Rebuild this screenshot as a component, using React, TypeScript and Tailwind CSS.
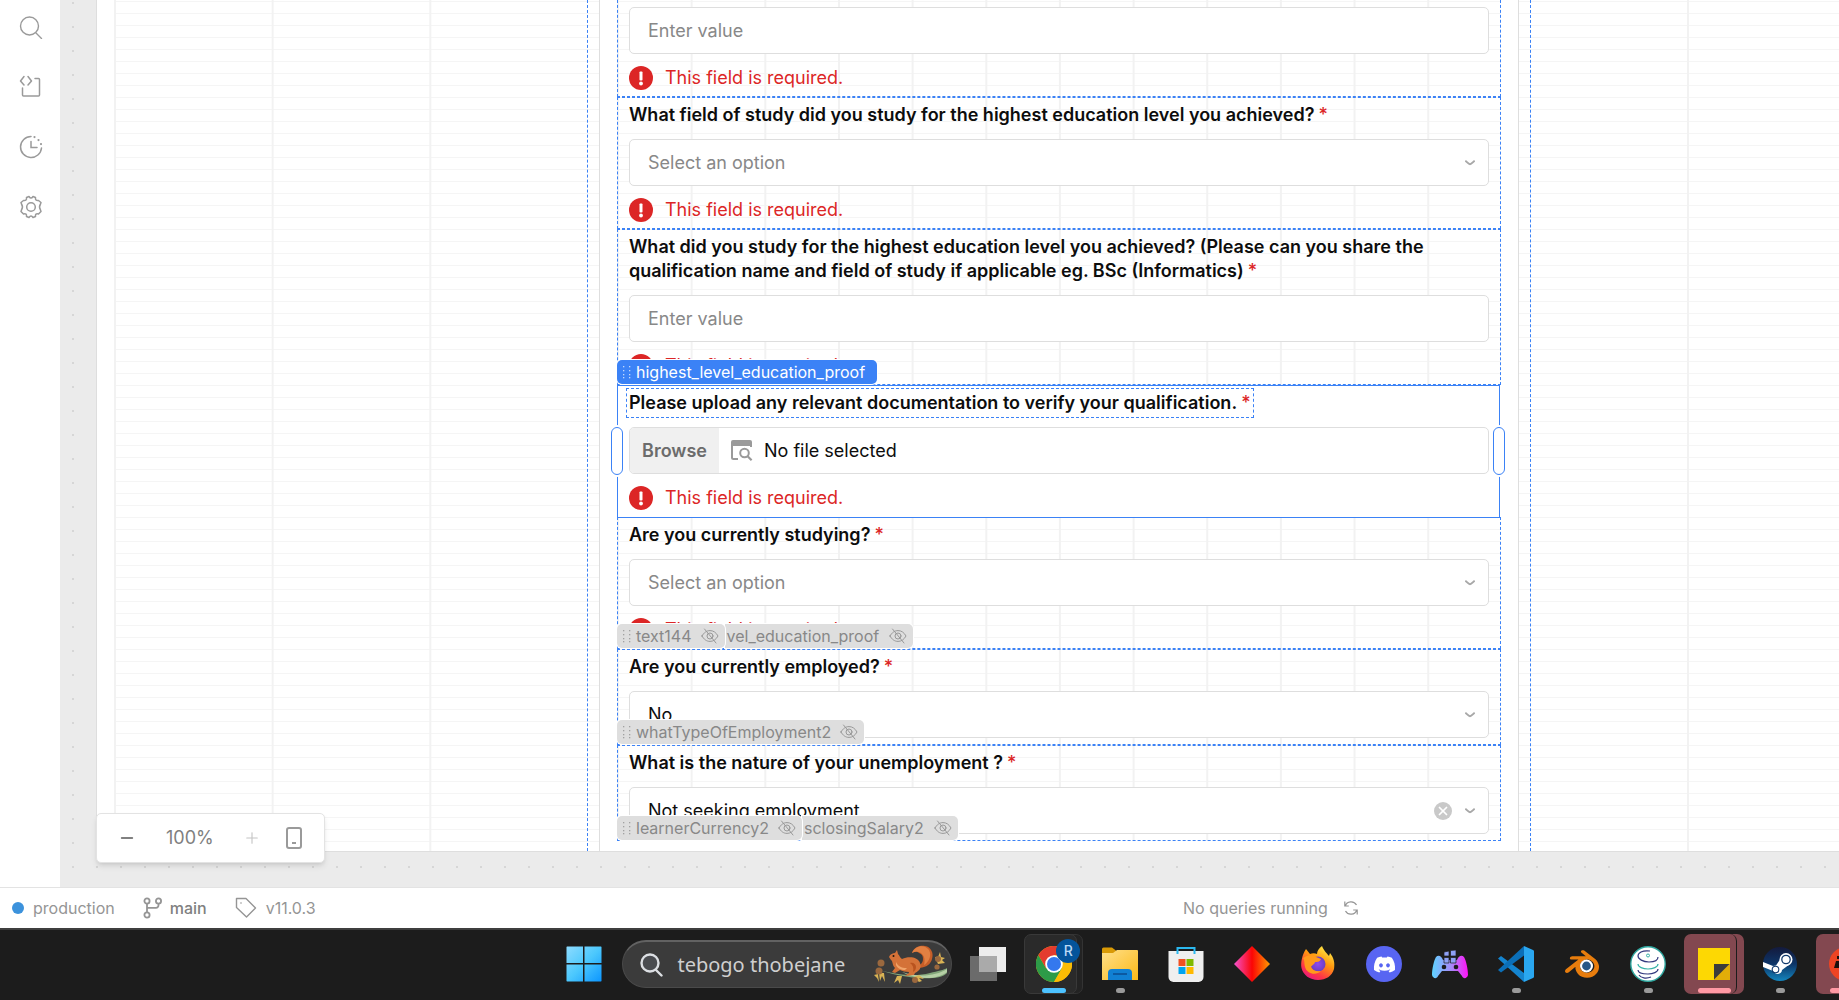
import type { ReactNode } from "react";
import { Minus, Plus, X } from "lucide-react";
import { FaDiscord } from "react-icons/fa";
import { SiBlender } from "react-icons/si";

type Tag = { name: string; tail?: boolean };

type Field = {
  id: string;
  label?: string;
  kind: "text" | "select" | "file";
  value?: string;
  clearable?: boolean;
  error?: boolean;
  activeTag?: string;
  tags?: Tag[];
};

const fields: Field[] = [
  { id: "institution", kind: "text", error: true },
  {
    id: "fieldOfStudy",
    label: "What field of study did you study for the highest education level you achieved?",
    kind: "select",
    error: true,
  },
  {
    id: "qualificationName",
    label:
      "What did you study for the highest education level you achieved? (Please can you share the qualification name and field of study if applicable eg. BSc (Informatics)",
    kind: "text",
    error: true,
    activeTag: "highest_level_education_proof",
  },
  {
    id: "educationProof",
    label: "Please upload any relevant documentation to verify your qualification.",
    kind: "file",
    error: true,
  },
  {
    id: "studying",
    label: "Are you currently studying?",
    kind: "select",
    error: true,
    tags: [{ name: "text144" }, { name: "vel_education_proof", tail: true }],
  },
  {
    id: "employed",
    label: "Are you currently employed?",
    kind: "select",
    value: "No",
    tags: [{ name: "whatTypeOfEmployment2" }],
  },
  {
    id: "unemploymentNature",
    label: "What is the nature of your unemployment ?",
    kind: "select",
    value: "Not seeking employment",
    clearable: true,
    tags: [{ name: "learnerCurrency2" }, { name: "sclosingSalary2", tail: true }],
  },
];

const box = "h-[47px] w-full rounded-[5px] border border-[#dedede] bg-white text-lg";

function Grip() {
  return (
    <svg width="8" height="14" viewBox="0 0 8 14" fill="currentColor" className="shrink-0 opacity-70" aria-hidden="true">
      {[0, 6].map((x) => [1, 5, 9, 12].map((y) => <rect key={`${x}-${y}`} x={x} y={y} width="1.3" height="1.3" />))}
    </svg>
  );
}

function HiddenEye() {
  return (
    <svg width="18" height="16" viewBox="0 0 18 16" fill="none" stroke="currentColor" strokeWidth="1" strokeLinecap="round" className="shrink-0 opacity-80" aria-hidden="true">
      <path d="M1 8c2-3.600 4.700-5.400 8-5.400s6 1.800 8 5.400c-2 3.600-4.700 5.400-8 5.400S3 11.600 1 8z" />
      <circle cx="9" cy="8" r="3" />
      <path d="M3.500 1l11.500 14" />
    </svg>
  );
}

function Tags({ field }: { field: Field }) {
  if (field.activeTag) {
    return (
      <div className="absolute bottom-0 -left-px z-20 flex h-6 items-center gap-[5px] rounded-[5px] bg-[#3b82f6] pr-3 pl-1.5 text-base leading-6 text-white ring-1 ring-white">
        <Grip />
        <span>{field.activeTag}</span>
      </div>
    );
  }
  if (!field.tags) return null;
  return (
    <div className="absolute bottom-0 -left-px z-20 flex text-base leading-6 text-[#888]">
      {field.tags.map((tag) => (
        <div
          key={tag.name}
          className={
            tag.tail
              ? "flex h-6 items-center gap-2.5 rounded-r-[5px] bg-[#dedede] pr-1.5 pl-0.5 ring-1 ring-white"
              : "relative z-10 flex h-6 items-center gap-[5px] rounded-[5px] bg-[#dedede] px-1.5 ring-1 ring-white"
          }
        >
          {!tag.tail && <Grip />}
          <span className={tag.tail ? "" : "pr-1"}>{tag.name}</span>
          <HiddenEye />
        </div>
      ))}
    </div>
  );
}

function FieldError() {
  return (
    <p className="mt-3 flex h-6 items-center gap-3 text-lg leading-6 text-[#dc2626]">
      <svg width="24" height="24" viewBox="0 0 24 24" aria-hidden="true">
        <circle cx="12" cy="12" r="12" fill="#dc2626" />
        <rect x="10.500" y="5.500" width="3" height="9" rx="0.800" fill="#fff" />
        <circle cx="12" cy="17.500" r="1.900" fill="#fff" />
      </svg>
      This field is required.
    </p>
  );
}

function SelectBox({ field }: { field: Field }) {
  return (
    <div className="relative">
      <select
        id={field.id}
        defaultValue={field.value ?? ""}
        className={`${box} appearance-none pr-16 pl-[18px] ${field.value ? "text-[#0d0d0d]" : "text-[#888]"}`}
      >
        {field.value ? <option value={field.value}>{field.value}</option> : <option value="">Select an option</option>}
      </select>
      <div className="pointer-events-none absolute inset-y-0 right-3.5 flex items-center gap-[13px]">
        {field.clearable && (
          <button type="button" aria-label="Clear" className="pointer-events-auto flex size-[18px] items-center justify-center rounded-full bg-[#c9c9c9] text-white">
            <X size={14} strokeWidth={3} />
          </button>
        )}
        <svg width="10" height="6" viewBox="0 0 10 6" fill="none" stroke="#a8a8a8" strokeWidth="2" strokeLinecap="round" aria-hidden="true">
          <path d="M1 1.200C2.500 2.600 3.800 4.200 5 4.200S7.500 2.600 9 1.200" />
        </svg>
      </div>
    </div>
  );
}

function FileBox({ id }: { id: string }) {
  return (
    <div className={`${box} relative flex items-center overflow-hidden`}>
      <input id={id} type="file" className="absolute inset-0 opacity-0" />
      <span className="flex h-full w-[89px] items-center justify-center bg-[#f0f0f0] font-semibold text-[#6c6c6c]">Browse</span>
      <svg width="22" height="21" viewBox="0 0 22 21" fill="none" stroke="#9a9a9a" className="ml-3 shrink-0" aria-hidden="true">
        <path d="M0 6V2a2 2 0 0 1 2-2h17a2 2 0 0 1 2 2v4z" fill="#9a9a9a" stroke="none" />
        <path d="M1 5v12.500a1.500 1.500 0 0 0 1.500 1.500H7M20 5v2" strokeWidth="2" />
        <circle cx="13.500" cy="13" r="4.300" strokeWidth="2" />
        <path d="M16.600 16.200l4 4" strokeWidth="2.200" />
      </svg>
      <span className="ml-[11px] text-[#0d0d0d]">No file selected</span>
    </div>
  );
}

function Widget({ field }: { field: Field }) {
  const selected = field.kind === "file";
  const handle = "absolute top-[41px] z-20 h-12 w-3 rounded-full border border-[#3b82f6] bg-white ring-2 ring-white";
  return (
    <div
      className={
        selected
          ? "relative border border-transparent bg-white px-[11px] pt-[5px] pb-1.5"
          : field.label
            ? "relative border border-dashed border-[#3b82f6] px-[11px] pt-[5px] pb-1.5"
            : "relative border border-t-0 border-dashed border-[#3b82f6] px-[11px] pt-[7px] pb-1.5"
      }
    >
      {field.label && (
        <label htmlFor={field.id} className="mb-3 block text-lg leading-6 font-semibold text-[#0d0d0d]">
          <span className={selected ? "inline-block align-top outline-1 outline-offset-2 outline-[#3b82f6] outline-dashed" : ""}>
            {field.label}
            <span className="ml-1 font-medium text-[#dc2626]">*</span>
          </span>
        </label>
      )}
      {field.kind === "text" && (
        <input id={field.id} type="text" aria-label={field.label ?? "Institution"} placeholder="Enter value" className={`${box} block px-[18px] placeholder:text-[#888]`} />
      )}
      {field.kind === "select" && <SelectBox field={field} />}
      {field.kind === "file" && <FileBox id={field.id} />}
      {field.error && <FieldError />}
      {selected && (
        <>
          {/* selection frame, laid over the neighbours' dashed edges */}
          <span className="pointer-events-none absolute -top-px right-0 -bottom-0.5 -left-px z-10 border border-[#3b82f6]" />
          <span className={`${handle} -left-[7px]`} />
          <span className={`${handle} -right-[5px]`} />
        </>
      )}
      <Tags field={field} />
    </div>
  );
}

function Sidebar() {
  return (
    <nav className="flex w-[60px] shrink-0 flex-col items-center gap-9 bg-white pt-[15px] pl-px text-[#9a9a9a]">
      <button type="button" aria-label="Search">
        <svg width="24" height="24" viewBox="0 0 24 24" fill="none" stroke="currentColor" strokeWidth="1.400" strokeLinecap="round">
          <circle cx="10.500" cy="11" r="9" />
          <path d="M17 18l5.500 5.500" />
        </svg>
      </button>
      <button type="button" aria-label="Code">
        <svg width="24" height="24" viewBox="0 0 24 24" fill="none" stroke="currentColor" strokeWidth="1.500" strokeLinecap="round" strokeLinejoin="round">
          <path d="M5 1.500L1.500 6 5 10M9 1.500L12.500 6 9 10" />
          <path d="M16 3.500h3.500a1 1 0 0 1 1 1V20a1 1 0 0 1-1 1H4.500a1 1 0 0 1-1-1v-7" />
        </svg>
      </button>
      <button type="button" aria-label="History">
        <svg width="24" height="24" viewBox="0 0 24 24" fill="none" stroke="currentColor" strokeWidth="1.500" strokeLinecap="round">
          <path d="M12 1.500a10.500 10.500 0 1 0 10.500 11.500M12 6.500v6h6" />
          <path d="M15.500 2v.1M19.500 5v.1M22 9v.1" strokeWidth="2.200" />
        </svg>
      </button>
      <button type="button" aria-label="Settings">
        <svg width="24" height="24" viewBox="0 0 24 24" fill="none" stroke="currentColor" strokeWidth="1.500" strokeLinejoin="round">
          <path d="M10 1.500Q12 4.500 14 1.500L16.500 2.500Q16 6 19.500 5.500L22 7.500 21.500 9Q19.500 12 21.500 15L22 16.500 19.500 19Q16 18 16.500 21.500L14 22.500Q12 19.500 10 22.500L7.500 21.500Q8 18 4.500 19L2 16.500 2.500 15Q4.500 12 2.500 9L2 7.500 4.500 5.500Q8 6 7.500 2.500z" />
          <circle cx="12" cy="12" r="4.300" />
        </svg>
      </button>
    </nav>
  );
}

function ZoomBar() {
  return (
    <div className="absolute bottom-6 left-9 flex h-[50px] w-[229px] items-center rounded-[5px] border border-[#e3e3e3] bg-white text-[#808080] shadow-md">
      <button type="button" aria-label="Zoom out" className="ml-[21px]">
        <Minus size={18} strokeWidth={2.5} />
      </button>
      <span className="ml-[30px] text-lg">100%</span>
      <button type="button" aria-label="Zoom in" className="ml-auto text-[#c4c4c4]">
        <Plus size={18} strokeWidth={1.5} />
      </button>
      <button type="button" aria-label="Mobile layout" className="mr-[22px] ml-[25px] text-[#9a9a9a]">
        <svg width="16" height="22" viewBox="0 0 16 22" fill="none" stroke="currentColor" strokeWidth="2">
          <rect x="1" y="1" width="14" height="20" rx="2" />
          <path d="M6 16h4" />
        </svg>
      </button>
    </div>
  );
}

const outerCells =
  "bg-[linear-gradient(90deg,#f2f2f2_2px,transparent_2px),linear-gradient(#f5f5f5_1px,transparent_1px)] bg-[size:calc(100%/3)_100%,100%_12px] bg-[position:0_0,0_1px]";

function Canvas() {
  return (
    <main className="relative min-w-0 flex-1 overflow-hidden bg-[#ebebeb] bg-[radial-gradient(circle_at_1px_1px,#d6d6d6_1px,transparent_1px)] bg-[size:24px_24px] bg-[position:12px_2px]">
      <div className="ml-9 grid grid-cols-[473fr_944fr_308fr] border-b border-l border-[#dedede] bg-white pl-[17px]">
        <div className={outerCells} />
        <div className="border-x border-dashed border-[#3b82f6] bg-[linear-gradient(#f5f5f5_1px,transparent_1px)] bg-[size:100%_12px] bg-[position:0_1px] px-[11px]">
          <div className="border-x border-[#dedede] bg-white px-[17px] pb-2.5">
            <div className="bg-[linear-gradient(90deg,#f2f2f2_2px,transparent_2px),linear-gradient(#f5f5f5_1px,transparent_1px)] bg-[size:calc(100%/12)_100%,100%_12px] bg-[position:0_0,0_1px]">
              {fields.map((field) => (
                <Widget key={field.id} field={field} />
              ))}
            </div>
          </div>
        </div>
        <div className="bg-[linear-gradient(90deg,transparent_156px,#f2f2f2_156px),linear-gradient(#f5f5f5_1px,transparent_1px)] bg-[size:158px_100%,100%_12px] bg-[position:0_0,0_1px]" />
      </div>
      <ZoomBar />
    </main>
  );
}

function StatusBar() {
  return (
    <footer className="grid h-[41px] grid-cols-[1183fr_656fr] items-center border-t border-[#e3e3e3] bg-white text-base text-[#959595]">
      <div className="flex items-center pl-3">
        <span className="size-3 rounded-full bg-[#3c92dc]" />
        <span className="ml-[9px]">production</span>
        <svg width="20" height="22" viewBox="0 0 20 22" fill="none" stroke="currentColor" strokeWidth="1.800" className="ml-7" aria-hidden="true">
          <circle cx="4" cy="4" r="2.600" />
          <circle cx="4" cy="18" r="2.600" />
          <circle cx="15.500" cy="4" r="2.600" />
          <path d="M4 6.600v8.800M4 10.800h9a2.500 2.500 0 0 0 2.500-2.500V6.600" />
        </svg>
        <span className="ml-[7px] font-medium text-[#808080]">main</span>
        <svg width="22" height="22" viewBox="0 0 22 22" fill="none" stroke="currentColor" strokeWidth="1.400" strokeLinejoin="round" className="ml-7" aria-hidden="true">
          <path d="M1.500 1.500h9.500l9.500 9.500-9 9-10-9.500z" />
          <circle cx="6" cy="6" r="0.800" fill="currentColor" stroke="none" />
        </svg>
        <span className="ml-[9px]">v11.0.3</span>
      </div>
      <div className="flex items-center gap-4">
        <span>No queries running</span>
        <button type="button" aria-label="Refresh queries">
          <svg width="14" height="16" viewBox="0 0 14 16" fill="none" stroke="currentColor" strokeWidth="1.200">
            <path d="M1.200 6A6.200 6.200 0 0 1 12.500 5M.8 1.500V6h4M12.800 10A6.200 6.200 0 0 1 1.500 11M13.200 14.500V10h-4" />
          </svg>
        </button>
      </div>
    </footer>
  );
}

function Squirrel() {
  return (
    <svg width="76" height="40" viewBox="0 0 76 40" aria-hidden="true">
      <path d="M0 23c16 5 40 10 58 5 8-2 14-3 17-5v5c-4 5-18 6-28 5-18-1-33-6-47-10z" fill="#82a67a" />
      <path d="M30 27c16 6 34 4 45-3v3c-10 8-30 8-45 0z" fill="#b6d0a6" />
      <g fill="#d9b354">
        <path d="M7 28l1 8 2-5 3 6-1-9zM2 30l3 3 2 4-1-8zM25 31l-3 7 4-3 2 4 2-8zM42 32l5 5 3-1-3-3 5 1-5-4zM63 12l3 7 7-1-3-3 3-2-4-1-1-5-2 5z" />
      </g>
      <path d="M40 8c2-6 8-8 13-7 6 1 9 7 7 13-1 4-4 7-8 8-3 1-6 1-8-1 4 0 7-3 7-7 0-3-1-5-4-6-3-2-5-1-7 0z" fill="#c65e28" />
      <path d="M40 8c3-8 13-9 17-3 3 5 0 12-5 15 1-4 1-9-3-12-3-2-6-2-9 0z" fill="#e28042" />
      <path d="M17 12c1-3 4-4 6-4l2-3 1 4c2 2 2 4 4 5 7-3 16-2 18 4 2 5-1 8-5 10l-1 2-9 1c2-2 4-2 4-4-3 0-7-1-9-2l-5 3-3-1 3-4c-3-3-2-7-4-8z" fill="#d47238" />
      <path d="M24 17c2 4 5 6 11 6l-2 2c-4 0-8-2-9-5z" fill="#f0a469" />
      <path d="M38 18c3-1 6 1 6 4 0 2-1 4-3 5 1-4 0-7-3-9z" fill="#b9531f" />
      <circle cx="21.500" cy="11" r="1" fill="#22150e" />
      <g fill="#9a683e">
        <circle cx="9" cy="18" r="3.500" />
        <circle cx="7" cy="26" r="3.500" />
        <circle cx="43" cy="35" r="3" />
        <circle cx="66" cy="14" r="3" />
        <circle cx="65" cy="22" r="2.600" />
      </g>
    </svg>
  );
}

function WindowsLogo() {
  return (
    <svg width="36" height="36" viewBox="0 0 36 36" aria-hidden="true">
      <defs>
        <linearGradient id="win" x1="0" y1="0" x2="36" y2="36" gradientUnits="userSpaceOnUse">
          <stop stopColor="#8fdcff" />
          <stop offset="0.500" stopColor="#4cc8fd" />
          <stop offset="1" stopColor="#0a94ff" />
        </linearGradient>
      </defs>
      <path d="M1 .5h16v16.500H.5V1zM18.500.5H35l.5.500v16H18.500zM.5 18.500H17v17H1l-.5-.5zM18.500 18.500h17V35l-.5.500H18.500z" fill="url(#win)" />
    </svg>
  );
}

function ChromeIcon() {
  return (
    <svg width="36" height="36" viewBox="0 0 36 36" aria-hidden="true">
      <circle cx="18" cy="18" r="18" fill="#fbbc05" />
      <path d="M2.400 9A18 18 0 0 0 18 36l7.800-13.500L18 18l-7.800 4.500z" fill="#2d9b48" />
      <path d="M18 9h15.600A18 18 0 0 1 18 36l7.800-13.500z" fill="#fbbc05" />
      <path d="M2.400 9A18 18 0 0 1 33.600 9H18l-7.800 13.500z" fill="#e33b2e" />
      <circle cx="18" cy="18" r="8.800" fill="#fff" />
      <circle cx="18" cy="18" r="7" fill="#3478ee" />
    </svg>
  );
}

function FolderIcon() {
  return (
    <svg width="36" height="34" viewBox="0 0 36 34" aria-hidden="true">
      <defs>
        <linearGradient id="folder" x1="0" y1="0" x2="1" y2="1">
          <stop stopColor="#ffe08a" />
          <stop offset="1" stopColor="#fbb917" />
        </linearGradient>
      </defs>
      <path d="M0 2a1.500 1.500 0 0 1 1.500-1.500H10l4.500 3.500v4H0z" fill="#d99a05" />
      <path d="M0 6h11l4-3h20a1 1 0 0 1 1 1v29H0z" fill="url(#folder)" />
      <path d="M6 33V26a4 4 0 0 1 4-4h16a4 4 0 0 1 4 4v7z" fill="#1180d3" />
      <path d="M11 27h14" stroke="#0b4d91" strokeWidth="1.500" />
    </svg>
  );
}

function StoreIcon() {
  return (
    <svg width="36" height="36" viewBox="0 0 36 36" aria-hidden="true">
      <path d="M.5 5h35v26a5 5 0 0 1-5 5h-25a5 5 0 0 1-5-5z" fill="#efefef" />
      <path d="M9.500 8V2h17v6" fill="none" stroke="#2bb8ef" strokeWidth="2" />
      <path d="M10.500 13h7v7h-7z" fill="#f25022" />
      <path d="M18.500 13h7v7h-7z" fill="#7fba00" />
      <path d="M10.500 21h7v7h-7z" fill="#00a4ef" />
      <path d="M18.500 21h7v7h-7z" fill="#ffb900" />
    </svg>
  );
}

function DiamondIcon() {
  return (
    <svg width="36" height="36" viewBox="0 0 36 36" aria-hidden="true">
      <defs>
        <linearGradient id="diamond">
          <stop stopColor="#f453d0" />
          <stop offset="0.500" stopColor="#fb0505" />
          <stop offset="1" stopColor="#ff9a00" />
        </linearGradient>
      </defs>
      <path d="M18 0l18 18-18 18L0 18z" fill="url(#diamond)" />
    </svg>
  );
}

function FirefoxIcon() {
  return (
    <svg width="36" height="36" viewBox="0 0 36 36" aria-hidden="true">
      <defs>
        <linearGradient id="fox" x1="0.800" y1="0" x2="0.200" y2="1">
          <stop stopColor="#fff44f" />
          <stop offset="0.400" stopColor="#ff980e" />
          <stop offset="0.750" stopColor="#ff3647" />
          <stop offset="1" stopColor="#e31587" />
        </linearGradient>
        <radialGradient id="globe">
          <stop stopColor="#8f4bf0" />
          <stop offset="1" stopColor="#6a3fc4" />
        </radialGradient>
      </defs>
      <path d="M6 3l4 5c2-1 5-1 7 0 0-3 2-6 5-8 2 5 4 6 7 10l1-3c4 5 5 10 4 16-2 7-8 11-16 11S3 29 1.500 22C.5 17 2 9 6 3z" fill="url(#fox)" />
      <circle cx="18" cy="18" r="7.500" fill="url(#globe)" />
      <path d="M3 12c4-3 9-4 13-1l5 2c-1 3-4 3-6 3 0 2-3 3-4 5 2 4 6 5 10 4-5 5-14 3-16-4-1-4 0-6-2-9z" fill="#ff9a1b" />
    </svg>
  );
}

function ControllerIcon() {
  return (
    <svg width="36" height="36" viewBox="0 0 36 36" aria-hidden="true">
      <defs>
        <linearGradient id="pad">
          <stop stopColor="#5ed3ff" />
          <stop offset="0.550" stopColor="#a987f8" />
          <stop offset="1" stopColor="#ff12f7" />
        </linearGradient>
      </defs>
      <path d="M4 11c2-2 5-2 7 3h14c2-5 5-5 7-3 2 3 4 12 4 18-1 4-5 4-6 1l-4-5H10l-4 5c-1 3-5 3-6-1 0-6 2-15 4-18z" fill="url(#pad)" />
      <path d="M12 6l5-1v5h-5zM18.500 4.500L24 4v6h-5.500zM12 11.500h5V17h-5zM18.500 11.500H24V17h-5.500z" fill="#8ea0f5" stroke="#1c1c1c" strokeWidth="0.700" />
      <circle cx="12" cy="21" r="2.300" fill="#1c1c1c" />
      <circle cx="24" cy="21" r="2.300" fill="#1c1c1c" />
    </svg>
  );
}

function CodeEditorIcon() {
  return (
    <svg width="36" height="36" viewBox="0 0 36 36" aria-hidden="true">
      <path d="M0 12.500l3-2.500 23 17v9z" fill="#1484cf" />
      <path d="M0 24l3 2.500L26 9.500V0z" fill="#0b6fb8" />
      <path d="M26 0l9 4a1.500 1.500 0 0 1 1 1.500v25a1.500 1.500 0 0 1-1 1.500l-9 4z" fill="#2aa7f0" />
    </svg>
  );
}

function BlenderIcon() {
  return (
    <span className="relative flex items-center justify-center">
      <SiBlender size={34} color="#e87d0d" />
      <svg width="34" height="34" viewBox="0 0 34 34" className="absolute inset-0" aria-hidden="true">
        <circle cx="21.500" cy="19" r="6.500" fill="#fff" />
        <circle cx="21.500" cy="19" r="4.400" fill="#265787" />
      </svg>
    </span>
  );
}

function DatabaseIcon() {
  return (
    <svg width="36" height="36" viewBox="0 0 36 36" fill="none" aria-hidden="true">
      <circle cx="18" cy="18" r="17.200" fill="#fff" stroke="#2fa79f" strokeWidth="1.400" />
      <path d="M20 5C12 4 8 7 8 10s5 6 11 6 9-2 9-5M8 24c0 3 5 4 10 4s10-2 10-5M9 29c2 3 7 4 12 2" stroke="#33397e" strokeWidth="1.200" />
      <path d="M8 18c0 3 5 5 10 5s10-2 10-5" stroke="#38b3a8" strokeWidth="1.200" />
      <circle cx="18" cy="9.500" r="1.500" stroke="#38b3a8" />
    </svg>
  );
}

function NoteIcon() {
  return (
    <svg width="32" height="32" viewBox="0 0 32 32" aria-hidden="true">
      <path d="M0 0h32v16L16 32H0z" fill="#fdd803" />
      <path d="M16 32V16h16v16z" fill="#e2ad08" />
      <path d="M16 16h15.500L16 31.500z" fill="#3b3b3b" />
    </svg>
  );
}

function SteamIcon() {
  return (
    <svg width="34" height="34" viewBox="0 0 34 34" aria-hidden="true">
      <defs>
        <linearGradient id="steam" x1="0" y1="0" x2="0" y2="1">
          <stop stopColor="#141a3c" />
          <stop offset="0.500" stopColor="#0d3568" />
          <stop offset="1" stopColor="#1485bd" />
        </linearGradient>
      </defs>
      <circle cx="17" cy="17" r="17" fill="url(#steam)" />
      <path d="M0 15l10 4 3-.5 5-7.500 9 6-8 6c0 4-6 6-9 1L0 20z" fill="#fff" />
      <circle cx="23" cy="12.500" r="6.500" fill="#fff" />
      <circle cx="23" cy="12.500" r="4.200" fill="#fff" stroke="#123a6d" strokeWidth="1.300" />
      <circle cx="12.500" cy="22.500" r="3.300" fill="none" stroke="#123a6d" strokeWidth="1.100" />
    </svg>
  );
}

function RecorderIcon() {
  return (
    <svg width="36" height="36" viewBox="0 0 36 36" aria-hidden="true">
      <circle cx="18" cy="18" r="17" fill="#ee4423" />
      <path d="M6 22l2-7h5l-1 7zM9 10h5v3H9z" fill="#1a0f0c" />
    </svg>
  );
}

type TaskItem = { name: string; icon: ReactNode; state?: "open" | "active" | "alert" };

const taskItems: TaskItem[] = [
  {
    name: "Task view",
    icon: (
      <svg width="36" height="34" viewBox="0 0 36 34" aria-hidden="true">
        <path d="M9 0h27v25H9z" fill="#ececec" />
        <path d="M0 9h27v25H0z" fill="#6b6b6b" />
        <path d="M9 9h18v16H9z" fill="#aaa" />
      </svg>
    ),
  },
  { name: "Chrome", icon: <ChromeIcon />, state: "active" },
  { name: "File Explorer", icon: <FolderIcon />, state: "open" },
  { name: "Store", icon: <StoreIcon /> },
  { name: "Diamond", icon: <DiamondIcon /> },
  { name: "Firefox", icon: <FirefoxIcon /> },
  {
    name: "Discord",
    icon: (
      <span className="flex size-9 items-center justify-center rounded-full bg-[#5865f2] text-white">
        <FaDiscord size={23} />
      </span>
    ),
  },
  { name: "Controller", icon: <ControllerIcon /> },
  { name: "Code", icon: <CodeEditorIcon />, state: "open" },
  { name: "Blender", icon: <BlenderIcon /> },
  { name: "Database", icon: <DatabaseIcon />, state: "open" },
  { name: "Sticky Notes", icon: <NoteIcon />, state: "alert" },
  { name: "Steam", icon: <SteamIcon />, state: "open" },
  { name: "Recorder", icon: <RecorderIcon />, state: "alert" },
];

function TaskButton({ item }: { item: TaskItem }) {
  const grouped = item.state === "active" || item.state === "alert";
  return (
    <button type="button" aria-label={item.name} className="relative flex h-[60px] w-[66px] shrink-0 items-center justify-center">
      {grouped && (
        <>
          <span
            className={
              item.state === "active"
                ? "absolute inset-y-0 left-3.5 w-12 rounded-[7px] border border-[#333] bg-[#232323]"
                : "absolute inset-y-0 left-3 w-[51px] rounded-[7px] bg-[#834850]"
            }
          />
          <span
            className={
              item.state === "active"
                ? "absolute inset-y-0 left-[3px] w-[53px] rounded-[7px] border border-[#393939] bg-[#2a2a2a]"
                : "absolute inset-y-0 left-[3px] w-[53px] rounded-[7px] border-r border-[#1c1c1c] bg-[#834850]"
            }
          />
        </>
      )}
      <span className="relative">{item.icon}</span>
      {item.name === "Chrome" && (
        <span className="absolute top-[5px] left-[35px] flex size-6 items-center justify-center rounded-full bg-[#04549b] text-sm font-medium text-[#b9d9f5]">R</span>
      )}
      {item.state === "open" && <span className="absolute bottom-px h-[5px] w-[9px] rounded-full bg-[#9a9a9a]" />}
      {item.state === "active" && <span className="absolute bottom-px h-[5px] w-6 rounded-full bg-[#4cc2ff]" />}
      {item.state === "alert" && <span className="absolute bottom-px h-[5px] w-[33px] rounded-full bg-[#ff99a4]" />}
    </button>
  );
}

function Taskbar() {
  return (
    <div className="flex h-[72px] shrink-0 items-center border-t-2 border-[#3f3f3f] bg-[#1c1c1c] pb-0.5 pl-[30.8%]">
      <button type="button" aria-label="Start" className="shrink-0">
        <WindowsLogo />
      </button>
      <label className="ml-5 flex h-12 w-[330px] shrink-0 items-center rounded-full border border-t-2 border-[#4a4a4a] border-t-[#626262] bg-[#3b3b3b] pl-4">
        <svg width="24" height="24" viewBox="0 0 24 24" fill="none" stroke="#dcdfe3" strokeWidth="2.400" strokeLinecap="round" aria-hidden="true">
          <circle cx="11" cy="10" r="8.500" fill="#4a4c50" />
          <path d="M17 17l5.500 5.500" />
        </svg>
        <input
          type="text"
          aria-label="Search"
          defaultValue="tebogo thobejane"
          className="ml-3.5 w-[195px] bg-transparent font-['Noto_Sans',sans-serif] text-xl text-[#cfcfcf]"
        />
        <Squirrel />
      </label>
      <div className="ml-[3px] flex min-w-0 flex-1 overflow-hidden">
        {taskItems.map((item) => (
          <TaskButton key={item.name} item={item} />
        ))}
      </div>
    </div>
  );
}

export default function App() {
  return (
    <div className="flex h-screen flex-col overflow-hidden font-['Inter',sans-serif]">
      <div className="flex min-h-0 flex-1">
        <Sidebar />
        <Canvas />
      </div>
      <StatusBar />
      <Taskbar />
    </div>
  );
}
